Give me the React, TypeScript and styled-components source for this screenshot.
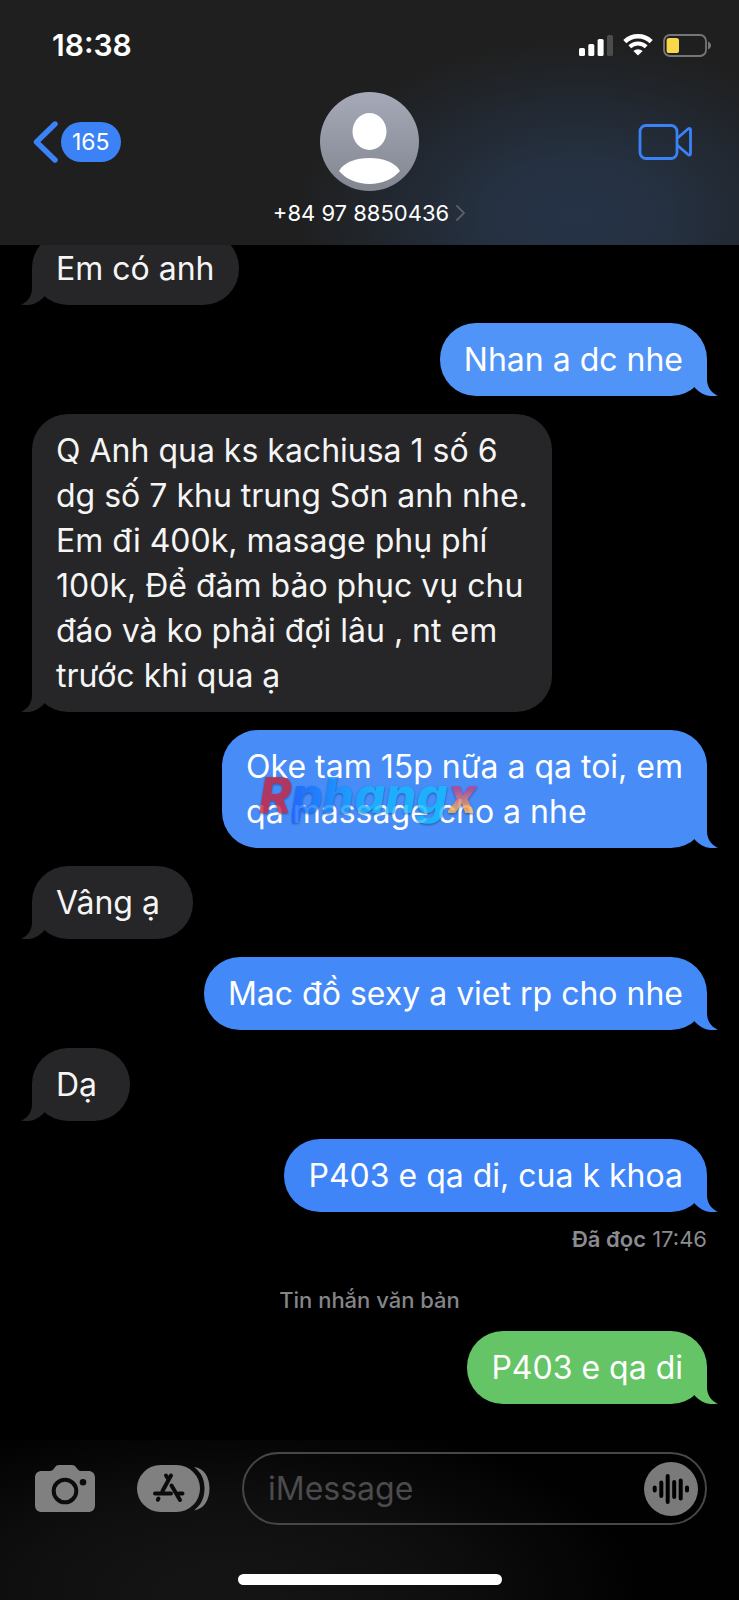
import React from "react";
import styled, { createGlobalStyle } from "styled-components";

const GlobalStyle = createGlobalStyle`
  * { box-sizing: border-box; }
  body {
    margin: 0;
    background: #000;
    color: #fff;
    font-family: Inter, "Liberation Sans", sans-serif;
  }
  button {
    padding: 0;
    border: 0;
    background: none;
    color: inherit;
    font: inherit;
    cursor: pointer;
  }
  svg { display: block; flex: none; }
`;

const Screen = styled.div`
  display: grid;
  grid-template-columns: minmax(0, 1fr);
  grid-template-rows: auto minmax(0, 1fr) auto;
  height: 100vh;
`;

const Header = styled.header`
  background:
    radial-gradient(ellipse 280px 175px at 78% 88%, #263347 0%, #253142 30%, rgba(31, 31, 31, 0) 100%),
    #1f1f1f;
`;

const StatusBar = styled.div`
  display: flex;
  align-items: center;
  justify-content: space-between;
  height: 92px;
  padding: 0 28px 2px 52px;
`;

const Clock = styled.time`
  font-size: 30px;
  font-weight: 600;
  line-height: 36px;
`;

const StatusIcons = styled.div`
  display: flex;
  align-items: center;
  gap: 10px;
`;

const Nav = styled.nav`
  display: grid;
  grid-template-columns: 1fr auto 1fr;
  align-items: center;
  row-gap: 8px;
  padding: 0 47px 18px 32px;
`;

const BackButton = styled.button`
  display: flex;
  align-items: center;
  gap: 3px;
  justify-self: start;
`;

const UnreadCount = styled.span`
  padding: 0 11px;
  border-radius: 20px;
  background: #3c82f7;
  font-size: 23px;
  line-height: 40px;
`;

const AvatarButton = styled.button`
  margin-left: 15px;
`;

const VideoButton = styled.button`
  justify-self: end;
`;

const ContactButton = styled.button`
  display: flex;
  align-items: center;
  justify-self: center;
  grid-column: 1 / -1;
  gap: 7px;
  margin-left: 14px;
  font-size: 22px;
  line-height: 28px;
`;

const Thread = styled.main`
  display: flex;
  flex-direction: column;
  justify-content: flex-end;
  gap: 18px;
  overflow: hidden;
  padding: 0 32px 36px;
`;

type Side = "in" | "out";

const Bubble = styled.div<{ $side: Side; $color: string }>`
  position: relative;
  flex: none;
  align-self: ${(p) => (p.$side === "in" ? "flex-start" : "flex-end")};
  max-width: 80%;
  padding: 14px 24px;
  border-radius: 36px;
  background: ${(p) => p.$color};
  color: ${(p) => (p.$side === "in" ? "#f5f5f5" : "#fff")};
  font-size: 32px;
  line-height: 45px;
  white-space: pre-wrap;
`;

const TailShape = styled.svg<{ $side: Side }>`
  position: absolute;
  bottom: 0;
  ${(p) => (p.$side === "in" ? "left: -11px; transform: scaleX(-1);" : "right: -11px;")}
`;

const BubbleText = styled.span`
  position: relative;
`;

const Watermark = styled.span`
  position: absolute;
  left: 37px;
  top: 38px;
  font-size: 49px;
  font-style: italic;
  font-weight: 800;
  line-height: 56px;
  white-space: nowrap;
  opacity: 0.8;
`;

const Ink = styled.span<{ $fill: string }>`
  background: ${(p) => p.$fill};
  background-clip: text;
  -webkit-background-clip: text;
  color: transparent;
  filter: drop-shadow(0 1px 1px #1c4a96);
`;

const Receipt = styled.p`
  align-self: flex-end;
  flex: none;
  margin: -6px 0 13px;
  color: #8b8b90;
  font-size: 22px;
  line-height: 30px;
  strong { font-weight: 600; }
`;

const ServiceLabel = styled.p`
  align-self: center;
  flex: none;
  margin: 0 0 -2px;
  color: #858589;
  font-size: 22px;
  font-weight: 500;
  line-height: 30px;
`;

const Footer = styled.footer`
  padding: 12px 32px 15px;
  background: radial-gradient(ellipse 420px 180px at 30% 95%, #151515 0%, #0f0f0f 50%, #010101 100%);
`;

const Composer = styled.form`
  display: flex;
  align-items: center;
  padding-left: 3px;
`;

const ToolButton = styled.button<{ $gap: number }>`
  margin-right: ${(p) => p.$gap}px;
`;

const Field = styled.div`
  display: flex;
  flex: 1;
  align-items: center;
  min-width: 0;
  height: 73px;
  padding: 0 7px 0 24px;
  border: 2px solid #474747;
  border-radius: 37px;
`;

const MessageInput = styled.input`
  flex: 1;
  min-width: 0;
  padding: 0;
  border: 0;
  outline: 0;
  background: none;
  color: #fff;
  font: 32px/45px Inter, "Liberation Sans", sans-serif;
  &::placeholder { color: #4b4b4d; opacity: 1; }
`;

const HomeIndicator = styled.div`
  width: 264px;
  height: 11px;
  margin: 49px auto 0;
  border-radius: 6px;
  background: #fff;
`;

const Signal = () => (
  <svg width="34" height="22" viewBox="0 0 34 22" fill="#fff" aria-hidden="true">
    <rect x="0" y="14" width="6" height="8" rx="1.6" />
    <rect x="9.3" y="10" width="6" height="12" rx="1.6" />
    <rect x="18.6" y="5" width="6" height="17" rx="1.6" />
    <rect x="28" y="1" width="6" height="21" rx="1.6" fill="#4c4c4d" />
  </svg>
);

const Wifi = () => (
  <svg width="30" height="22" viewBox="0 0 30 22" fill="none" aria-hidden="true">
    <path d="M1.8 7.6a19 19 0 0 1 26.4 0" stroke="#fff" strokeWidth="4.4" />
    <path d="M6.8 12.7a11.8 11.8 0 0 1 16.4 0" stroke="#fff" strokeWidth="4" />
    <path d="M15 21.6l-4.6-4.6a6.6 6.6 0 0 1 9.2 0z" fill="#fff" />
  </svg>
);

const Battery = () => (
  <svg width="48" height="23" viewBox="0 0 48 23" aria-hidden="true">
    <rect x="1" y="1" width="42" height="21" rx="6" fill="none" stroke="#757677" strokeWidth="1.8" />
    <rect x="3.6" y="4" width="12.4" height="15" rx="2.6" fill="#f8d84a" />
    <path d="M45 7.5c4 1.5 4 6.5 0 8z" fill="#757677" />
  </svg>
);

const BackChevron = () => (
  <svg width="26" height="42" viewBox="0 0 26 42" fill="none" aria-hidden="true">
    <path d="M23 3L4.5 21 23 39" stroke="#3c82f7" strokeWidth="5.4" strokeLinecap="round" strokeLinejoin="round" />
  </svg>
);

const Avatar = () => (
  <svg width="99" height="99" viewBox="0 0 99 99" aria-hidden="true">
    <defs>
      <linearGradient id="avatarShade" x1="0" y1="0" x2="0" y2="1">
        <stop offset="0" stopColor="#a6aab8" />
        <stop offset="1" stopColor="#828690" />
      </linearGradient>
    </defs>
    <circle cx="49.5" cy="49.5" r="49.5" fill="url(#avatarShade)" />
    <ellipse cx="49.5" cy="39.5" rx="17" ry="18.5" fill="#fff" />
    <path d="M19 79C24 70 36 66 49.5 66S75 70 80 79C73 87 62 92 49.5 92S26 87 19 79z" fill="#fff" />
  </svg>
);

const VideoCamera = () => (
  <svg width="54" height="36" viewBox="0 0 54 36" fill="none" stroke="#3c82f7" strokeWidth="2.8" strokeLinejoin="round" aria-hidden="true">
    <rect x="2" y="1.5" width="37" height="33" rx="6" />
    <path d="M39 14.5L50 5c1.5-1.2 2.5-.6 2.5 1V29.5c0 1.6-1 2.2-2.5 1L39 21" />
  </svg>
);

const DetailChevron = () => (
  <svg width="9" height="16" viewBox="0 0 9 16" fill="none" aria-hidden="true">
    <path d="M1 1l7 7-7 7" stroke="#5c5f66" strokeWidth="1.8" strokeLinecap="round" />
  </svg>
);

const CameraIcon = () => (
  <svg width="60" height="47" viewBox="0 0 60 47" fill="#808080" aria-hidden="true">
    <path d="M7 6h8c2 0 3-1 4-2.500C20.500 1 22 0 24 0h13c2 0 3.500 1 5 3.500C43 5 44 6 46 6h7c4.500 0 7 2.500 7 7v27c0 4.500-2.500 7-7 7H7c-4.500 0-7-2.500-7-7V13c0-4.500 2.500-7 7-7z" />
    <circle cx="30" cy="26" r="11.3" fill="none" stroke="#0b0b0b" strokeWidth="4" />
    <circle cx="48" cy="17.2" r="3.3" fill="#0b0b0b" />
  </svg>
);

const AppsIcon = () => (
  <svg width="73" height="47" viewBox="0 0 73 47" fill="none" aria-hidden="true">
    <path d="M57 2C67 3 72.500 12 72.500 23.500S67 44 57 45.500C64 40 67.500 33 67.500 23.500S64 7 57 2z" fill="#808080" />
    <rect width="63" height="47" rx="23.5" fill="#808080" />
    <g stroke="#0b0b0b" strokeWidth="4" strokeLinecap="round">
      <path d="M29 10.500l2.500 4M34 10.500L25.500 26M18 28.500H34M42 28.500h3.500M34.500 20.500l8.500 14.500M21.500 33.500L20.800 34.800" />
    </g>
  </svg>
);

const VoiceIcon = () => (
  <svg width="54" height="54" viewBox="0 0 54 54" aria-hidden="true">
    <circle cx="27" cy="27" r="27" fill="#7a7a7a" />
    <path d="M10.700 25.500v3M17.300 20.500v13.500M23.700 14v26M30.200 20v15M36.700 18.500v18M43 25.500v3" stroke="#000" strokeWidth="4" strokeLinecap="round" />
  </svg>
);

const Tail = ({ side, color }: { side: Side; color: string }) => (
  <TailShape $side={side} width="34" height="36" viewBox="0 0 34 36" aria-hidden="true">
    <path d="M23 0V19C23 27 27 33 34 35.500C25 37.500 17 34.500 11 28L0 0z" fill={color} />
  </TailShape>
);

interface MessageProps {
  side: Side;
  color?: string;
  text: string;
  children?: React.ReactNode;
}

const Message = ({ side, color = "#262628", text, children }: MessageProps) => (
  <Bubble $side={side} $color={color}>
    <Tail side={side} color={color} />
    <BubbleText>{text}</BubbleText>
    {children}
  </Bubble>
);

export default function App() {
  return (
    <Screen>
      <GlobalStyle />
      <Header>
        <StatusBar>
          <Clock>18:38</Clock>
          <StatusIcons>
            <Signal />
            <Wifi />
            <Battery />
          </StatusIcons>
        </StatusBar>
        <Nav>
          <BackButton type="button">
            <BackChevron />
            <UnreadCount>165</UnreadCount>
          </BackButton>
          <AvatarButton type="button" aria-label="Liên hệ">
            <Avatar />
          </AvatarButton>
          <VideoButton type="button" aria-label="FaceTime">
            <VideoCamera />
          </VideoButton>
          <ContactButton type="button">
            +84 97 8850436
            <DetailChevron />
          </ContactButton>
        </Nav>
      </Header>

      <Thread>
        <Message side="in" text="Em có anh" />
        <Message side="out" color="#5094f7" text="Nhan a dc nhe" />
        <Message
          side="in"
          text={
            "Q Anh qua ks kachiusa 1 số 6\ndg số 7 khu trung Sơn anh nhe.\nEm đi 400k, masage phụ phí\n100k, Để đảm bảo phục vụ chu\nđáo và ko phải đợi lâu , nt em\ntrước khi qua ạ"
          }
        />
        <Message side="out" color="#478cf7" text={"Oke tam 15p nữa a qa toi, em\nqa massage cho a nhe"}>
          <Watermark>
            <Ink $fill="linear-gradient(#c8233f, #d0203c)">R</Ink>
            <Ink $fill="linear-gradient(90deg, #1762ff, #16b4ff 50%, #14bcff)">phang</Ink>
            <Ink $fill="linear-gradient(#c0448c 40%, #ffb04a 75%)">x</Ink>
          </Watermark>
        </Message>
        <Message side="in" text={"Vâng ạ\u00a0"} />
        <Message side="out" color="#4389f7" text="Mac đồ sexy a viet rp cho nhe" />
        <Message side="in" text={"Dạ\u00a0"} />
        <Message side="out" color="#3f85f7" text="P403 e qa di, cua k khoa" />
        <Receipt>
          <strong>Đã đọc</strong> 17:46
        </Receipt>
        <ServiceLabel>Tin nhắn văn bản</ServiceLabel>
        <Message side="out" color="#65c466" text="P403 e qa di" />
      </Thread>

      <Footer>
        <Composer onSubmit={(e) => e.preventDefault()}>
          <ToolButton type="button" $gap={42} aria-label="Máy ảnh">
            <CameraIcon />
          </ToolButton>
          <ToolButton type="button" $gap={32} aria-label="Ứng dụng">
            <AppsIcon />
          </ToolButton>
          <Field>
            <MessageInput type="text" placeholder="iMessage" aria-label="iMessage" />
            <button type="button" aria-label="Ghi âm">
              <VoiceIcon />
            </button>
          </Field>
        </Composer>
        <HomeIndicator />
      </Footer>
    </Screen>
  );
}
